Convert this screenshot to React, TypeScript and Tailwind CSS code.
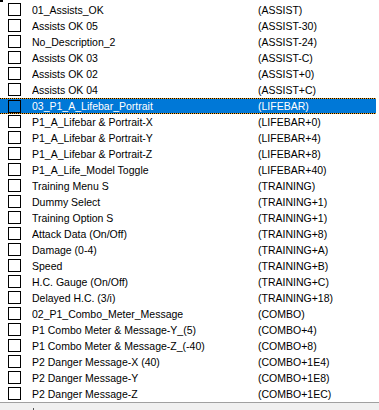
import React from "react";

const rows: [string, string][] = [
  ["01_Assists_OK", "(ASSIST)"],
  ["Assists OK 05", "(ASSIST-30)"],
  ["No_Description_2", "(ASSIST-24)"],
  ["Assists OK 03", "(ASSIST-C)"],
  ["Assists OK 02", "(ASSIST+0)"],
  ["Assists OK 04", "(ASSIST+C)"],
  ["03_P1_A_Lifebar_Portrait", "(LIFEBAR)"],
  ["P1_A_Lifebar & Portrait-X", "(LIFEBAR+0)"],
  ["P1_A_Lifebar & Portrait-Y", "(LIFEBAR+4)"],
  ["P1_A_Lifebar & Portrait-Z", "(LIFEBAR+8)"],
  ["P1_A_Life_Model Toggle", "(LIFEBAR+40)"],
  ["Training Menu S", "(TRAINING)"],
  ["Dummy Select", "(TRAINING+1)"],
  ["Training Option S", "(TRAINING+1)"],
  ["Attack Data (On/Off)", "(TRAINING+8)"],
  ["Damage (0-4)", "(TRAINING+A)"],
  ["Speed", "(TRAINING+B)"],
  ["H.C. Gauge (On/Off)", "(TRAINING+C)"],
  ["Delayed H.C. (3/i)", "(TRAINING+18)"],
  ["02_P1_Combo_Meter_Message", "(COMBO)"],
  ["P1 Combo Meter & Message-Y_(5)", "(COMBO+4)"],
  ["P1 Combo Meter & Message-Z_(-40)", "(COMBO+8)"],
  ["P2 Danger Message-X (40)", "(COMBO+1E4)"],
  ["P2 Danger Message-Y", "(COMBO+1E8)"],
  ["P2 Danger Message-Z", "(COMBO+1EC)"],
];

const dots =
  "h-px w-full bg-[repeating-linear-gradient(90deg,#000_0px,#000_1px,#f5a623_1px,#f5a623_2px)]";

function Row({ name, code, selected }: { name: string; code: string; selected: boolean }) {
  if (selected) {
    return (
      <div className="flex h-[16px] w-[376px] flex-col bg-[#0078d7] text-white">
        <div className={dots} />
        <div className="flex h-[14px] items-center">
          <div className="ml-[8px] h-[13px] w-[13px] shrink-0 border border-black" />
          <div className="ml-[11px] w-[226px] shrink-0 whitespace-nowrap leading-[14px]">{name}</div>
          <div className="whitespace-nowrap leading-[14px]">{code}</div>
        </div>
        <div className={dots} />
      </div>
    );
  }
  return (
    <div className="flex h-[16px] w-[376px] items-start text-black">
      <div className="ml-[8px] mt-px h-[13px] w-[13px] shrink-0 border border-black bg-white" />
      <div className="ml-[11px] w-[226px] shrink-0 overflow-hidden whitespace-nowrap leading-[16px]">{name}</div>
      <div className="whitespace-nowrap leading-[16px]">{code}</div>
    </div>
  );
}

export default function App() {
  return (
    <div
      className="relative flex h-[410px] w-[379px] flex-col overflow-hidden bg-white text-[10.5px]"
      style={{ fontFamily: "'Liberation Sans', Arial, sans-serif" }}
    >
      <div className="absolute left-0 top-0 h-[2px] w-[3px] bg-black" />
      <div className="h-[2px] shrink-0" />
      {rows.map(([n, c], i) => (
        <Row key={i} name={n} code={c} selected={i === 6} />
      ))}
      <div className="h-px w-full shrink-0 bg-[#a0a0a0]" />
      <div className="relative flex-1 bg-[#f0f0f0]">
        <div className="absolute left-[33px] top-[5px] h-[2px] w-px bg-[#555]" />
      </div>
    </div>
  );
}
